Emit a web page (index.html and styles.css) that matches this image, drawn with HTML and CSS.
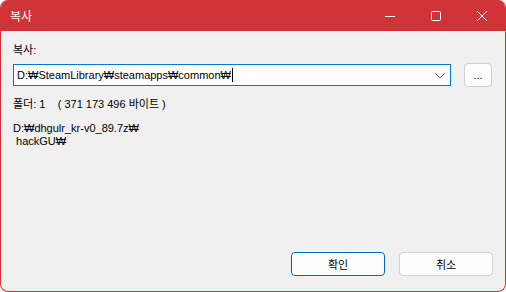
FILE: index.html
```html
<!DOCTYPE html>
<html lang="ko">
  <head>
    <meta charset="UTF-8"/>
    <title>복사</title>
    <link rel="stylesheet" href="styles.css">
  </head>
  <body>
    <div class="window">
      <div class="titlebar">
        <span class="title">복사</span>
        <span class="caption">
          <span class="cap-btn"><svg width="12" height="12" viewBox="0 0 12 12"><path d="M1 6.5h10" stroke="#fff" stroke-width="1"/></svg></span>
          <span class="cap-btn"><svg width="12" height="12" viewBox="0 0 12 12"><rect x="1.5" y="1.5" width="9" height="9" fill="none" stroke="#fff" stroke-width="1" rx="1"/></svg></span>
          <span class="cap-btn"><svg width="12" height="12" viewBox="0 0 12 12"><path d="M1 1l10 10M11 1L1 11" stroke="#fff" stroke-width="1"/></svg></span>
        </span>
      </div>
      <div class="content">
        <div class="label">복사:</div>
        <div class="row">
          <div class="combo">
            <span class="value">D:₩SteamLibrary₩steamapps₩common₩</span><span class="caret"></span>
            <svg class="chev" width="10" height="6" viewBox="0 0 10 6"><path d="M0.5 0.5l4.5 4.5 4.5-4.5" fill="none" stroke="#555" stroke-width="1"/></svg>
          </div>
          <button class="btn small">...</button>
        </div>
        <div class="info">폴더: 1&nbsp;&nbsp;&nbsp;&nbsp;( 371 173 496 바이트 )</div>
        <div class="files">
          <div>D:₩dhgulr_kr-v0_89.7z₩</div>
          <div>&nbsp;hackGU₩</div>
        </div>
        <div class="actions">
          <button class="btn default">확인</button>
          <button class="btn">취소</button>
        </div>
      </div>
    </div>
  </body>
</html>
```
FILE: styles.css
```css
html, body { margin: 0; padding: 0; background: #fff; }
body { font-family: "Liberation Sans", "Noto Sans CJK KR", sans-serif; font-size: 11px; color: #000; }
.window { width: 506px; height: 292px; box-sizing: border-box; border: 1px solid #d13438; border-top: 0;
  border-radius: 8px; background: #f0f0f0; display: flex; flex-direction: column; overflow: hidden; }
.titlebar { height: 31px; background: #d13438; color: #fff; display: flex; align-items: center;
  justify-content: space-between; padding-left: 9px; flex: none; }
.title { font-size: 12px; }
.caption { display: flex; height: 100%; }
.cap-btn { width: 46px; display: flex; align-items: center; justify-content: center; }
.content { flex: 1; display: flex; flex-direction: column; padding: 0 12px 0 12px; }
.label { margin-top: 11px; height: 16px; line-height: 16px; }
.row { display: flex; align-items: center; margin-top: 5px; }
.combo { width: 438px; height: 22px; box-sizing: border-box; border: 1px solid #0078d7; background: #fff;
  display: flex; align-items: center; padding-left: 3px; position: relative; }
.caret { display: inline-block; width: 1px; height: 14px; background: #000; margin-left: 1px; }
.chev { position: absolute; right: 5px; top: 8px; }
.btn { font-family: inherit; font-size: 11px; color: #000; background: #fdfdfd; border: 1px solid #d0d0d0;
  border-radius: 4px; height: 24px; width: 94px; padding: 0; box-sizing: border-box; }
.btn.small { width: 28px; height: 24px; margin-left: 13px; }
.btn.default { border-color: #0067c0; }
.info { margin-top: 9px; height: 16px; line-height: 16px; }
.files { margin-top: 10px; line-height: 13px; }
.actions { margin-top: auto; display: flex; justify-content: flex-end; gap: 14px; margin-bottom: 15px; }
```
